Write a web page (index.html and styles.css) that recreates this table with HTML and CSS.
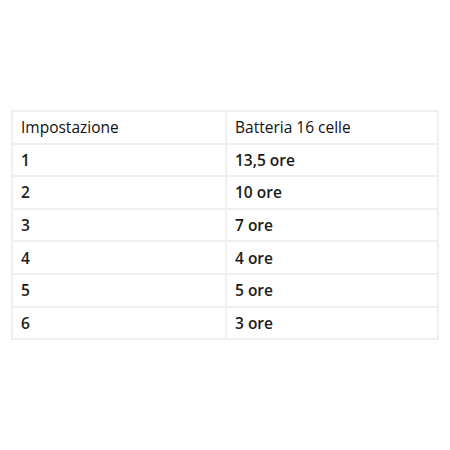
FILE: index.html
```
<!DOCTYPE html>
<html>
<head>
<meta charset="utf-8">
<link rel="stylesheet" href="styles.css">
</head>
<body>
<div class="page">
<table class="tbl">
<tr class="head"><td>Impostazione</td><td>Batteria 16 celle</td></tr>
<tr><td>1</td><td>13,5 ore</td></tr>
<tr><td>2</td><td>10 ore</td></tr>
<tr><td>3</td><td>7 ore</td></tr>
<tr><td>4</td><td>4 ore</td></tr>
<tr><td>5</td><td>5 ore</td></tr>
<tr><td>6</td><td>3 ore</td></tr>
</table>
</div>
</body>
</html>
```
FILE: styles.css
```
html, body { margin: 0; padding: 0; background: #fff; }
.page { width: 450px; height: 450px; padding: 110px 0 0 11px; box-sizing: border-box; }
.tbl {
  border-collapse: collapse;
  width: 428px;
  font-family: "Open Sans", sans-serif;
  font-size: 15.5px;
  color: #1a1a1a;
}
.tbl td {
  border: 2px solid #efefef;
  height: 30.6px;
  padding: 0 0 0 8px;
  font-weight: 600;
  vertical-align: middle;
}
.tbl td:first-child { width: 204px; }
.tbl .head td { font-weight: 400; color: #111; }
```
